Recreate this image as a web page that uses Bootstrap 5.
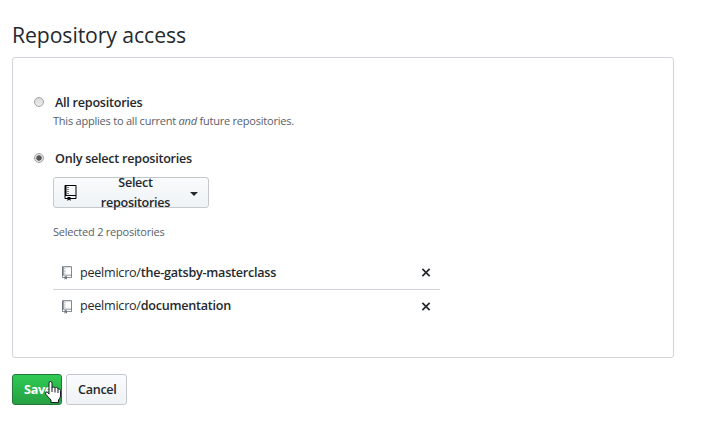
<!DOCTYPE html>
<html lang="en">
<head>
<meta charset="utf-8">
<meta name="viewport" content="width=device-width, initial-scale=1">
<title>Repository access</title>
<link rel="stylesheet" href="https://cdn.jsdelivr.net/npm/bootstrap@5.3.0/dist/css/bootstrap.min.css">
<style>
body{font-family:"Open Sans","Noto Sans",sans-serif;font-size:13px;line-height:20px;color:#24292e;background:#fff;overflow:hidden}
.page{padding:20px 28px 0 12px}
.title{font-size:21.2px;line-height:30px;font-weight:400;margin:0 0 7px;letter-spacing:-.08px}
.panel{border:1px solid #d1d5da;border-radius:3px;height:301px;padding:35px 21px 0}
.opt{height:20px}
.opt .radio-dot{width:10px;height:10px;margin:4px 11px 0 0;border:1px solid #a3a3a3;background:linear-gradient(#d8d8d8,#ececec);box-shadow:none}
.opt .radio-dot:checked{border-color:#a3a3a3;background:radial-gradient(circle,#555 0 2.3px,#e4e4e4 3.1px)}
.strong{font-weight:600}
.opt .strong{font-size:12.6px;letter-spacing:-.25px}
.note{font-size:11px;line-height:16px;color:#586069;letter-spacing:-.22px}
.inset{margin-left:19px}
.btn-gh{--bs-btn-font-size:12.6px;--bs-btn-line-height:20px;--bs-btn-font-weight:600;--bs-btn-color:#24292e;--bs-btn-border-color:#c5c9cd;--bs-btn-border-radius:3px;--bs-btn-padding-y:0;--bs-btn-padding-x:11px;height:31px;letter-spacing:-.3px;background:linear-gradient(#fafbfc,#eff3f6)}
.btn-save{--bs-btn-color:#fff;--bs-btn-border-color:#23793a;--bs-btn-font-weight:700;background:linear-gradient(#34d058,#28a745);background:linear-gradient(#2fcb53,#269f42);width:50px}
.btn-cancel{width:61px}
.btn-select{width:156px;--bs-btn-padding-x:10px}
.tri{width:0;height:0;border:4px solid transparent;border-top-color:#24292e;border-bottom:0;margin:2px 0 0 4px}
.repos{width:387px}
.repo{height:33px;padding:0 8px;font-size:12.6px;letter-spacing:-.25px}
.repo + .repo{border-top:1px solid #d1d5da}
.repo-ico{fill:#6a737d;margin:1px 8px 0 1px}
.pointer{left:32px;top:6px}
svg{display:block;flex:none}
</style>
<script src="https://cdn.jsdelivr.net/npm/bootstrap@5.3.0/dist/js/bootstrap.bundle.min.js"></script>
</head>
<body>
<svg width="0" height="0" class="position-absolute" aria-hidden="true">
<symbol id="repo" viewBox="0 0 12 16"><path fill-rule="evenodd" d="M4 9H3V8h1v1zm0-3H3v1h1V6zm0-2H3v1h1V4zm0-2H3v1h1V2zm8-1v12c0 .55-.45 1-1 1H6v2l-1.5-1.5L3 16v-2H1c-.55 0-1-.45-1-1V1c0-.55.45-1 1-1h10c.55 0 1 .45 1 1zm-1 10H1v2h2v-1h3v1h5v-2zm0-10H2v9h9V1z"/></symbol>
<symbol id="x" viewBox="0 0 12 16"><path d="M7.48 8l3.75 3.75-1.48 1.48L6 9.48l-3.75 3.75-1.48-1.48L4.52 8 .77 4.25l1.48-1.48L6 6.52l3.75-3.75 1.48 1.48L7.48 8z"/></symbol>
</svg>
<main class="page">
<h1 class="title">Repository access</h1>
<section class="panel">
<label class="opt d-flex"><input type="radio" name="access" class="form-check-input radio-dot"><span class="strong">All repositories</span></label>
<p class="note inset mb-0">This applies to all current <em>and</em> future repositories.</p>
<label class="opt d-flex mt-3 pt-1 h-auto"><input type="radio" name="access" class="form-check-input radio-dot" checked><span class="strong">Only select repositories</span></label>
<div class="inset">
<button type="button" class="btn btn-gh btn-select d-flex align-items-center mt-2"><svg class="me-1" width="13" height="16"><use href="#repo"/></svg><span class="ms-1">Select repositories</span><i class="tri"></i></button>
<p class="note sel mb-0 mt-3">Selected 2 repositories</p>
<div class="repos mt-3">
<div class="repo d-flex align-items-center"><svg class="repo-ico" width="10" height="14"><use href="#repo"/></svg><span>peelmicro/<span class="strong">the-gatsby-masterclass</span></span><svg class="ms-auto" width="12" height="13" fill="#24292e"><use href="#x"/></svg></div>
<div class="repo d-flex align-items-center"><svg class="repo-ico" width="10" height="14"><use href="#repo"/></svg><span>peelmicro/<span class="strong">documentation</span></span><svg class="ms-auto" width="12" height="13" fill="#24292e"><use href="#x"/></svg></div>
</div>
</div>
</section>
<div class="d-flex mt-3 position-relative actions">
<button type="button" class="btn btn-gh btn-save">Save</button>
<button type="button" class="btn btn-gh btn-cancel ms-1">Cancel</button>
<svg class="pointer position-absolute" width="18" height="24" viewBox="0 0 18 24"><path d="M5 14V3Q5 1.5 6.5 1.5T8 3V8Q8 7 9.3 7T11 8.500Q11 7.500 12.500 7.500T14 9.500Q14 8.800 15.200 9T16.500 10.500V16Q16.500 18 14.500 20V22.500H7V20Q5 18 2 14.500 1 13 2 12T5 14Z" fill="#fff" stroke="#1b1b2b"/><path d="M8 8V12M11 9V12.500M14 10V13" stroke="#1b1b2b"/></svg>
</div>
</main>
</body>
</html>
